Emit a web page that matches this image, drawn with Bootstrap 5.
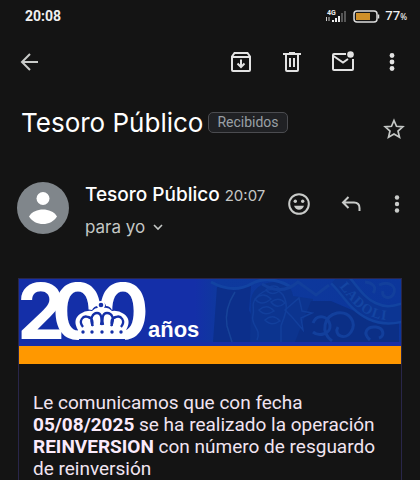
<!DOCTYPE html>
<html lang="es" data-bs-theme="dark">
<head>
<meta charset="utf-8">
<meta name="viewport" content="width=device-width, initial-scale=1">
<title>Tesoro Público</title>
<link href="https://cdn.jsdelivr.net/npm/bootstrap@5.3.0/dist/css/bootstrap.min.css" rel="stylesheet">
<style>
body{background:#141414;color:#e3e3e3;font-family:Roboto,"Liberation Sans",sans-serif;overflow-x:hidden}
svg{display:block}
.status-row{height:32px;padding:0 13px 0 25px;font-size:14px;line-height:16px;color:#f0f0f0}
.status-icons{gap:5px}
.pct{font-family:"Noto Sans",sans-serif;font-size:13px;font-weight:500}
.pct span{font-size:8px}
.icon-btn{width:36px;height:36px;padding:0;border:0;background:none;color:#e3e3e3;display:flex;align-items:center;justify-content:center;flex:none}
.toolbar{height:58px;padding:2px 12px 0 11px}
.actions{gap:15px}
.actions .more{width:32px}
.subject{height:65px;padding:0 8px 0 21px}
.subject h1{font-family:Inter,sans-serif;font-size:26px;line-height:32px;font-weight:400}
.folder{font-size:14px;line-height:19px;height:21px;padding:0 8px;border:1px solid #4b4c50;border-radius:5px;background:#202124;color:#9aa0a6;margin-left:5px}
.star{margin-top:12px}
.sender{padding:26px 11px 0 17px;height:100px}
.avatar{margin-top:1px}
.who{margin-left:16px;margin-top:2px;font-family:Inter,sans-serif}
.who h2{font-family:Inter,sans-serif;font-size:19px;line-height:24px;font-weight:500}
.when{font-size:15px;line-height:26px;color:#c4c7c5;margin-left:5px}
.para{padding:0;border:0;background:none;color:#c4c7c5;font-size:17px;line-height:24px;margin-top:6px}
.reactions{gap:16px;margin-top:5px}
.reactions .more{width:24px}
.letter{margin:23px 18px 0;border:1px solid #29264a;border-bottom:0}
.banner{height:67px;background:#142fa8;overflow:hidden}
.banner svg{width:100%;height:67px}
.stripe{height:18px;background:#ff9800}
.letter p{padding:28px 14px 0;font-size:19px;line-height:22px;color:#f1e4f1}
.letter b{font-weight:700;color:#fbeafb}
.num{font-family:Inter,sans-serif;font-weight:700;font-size:77px}
.word{font-family:"Liberation Sans",sans-serif;font-weight:700;font-size:22px}
.legend-arc{font-family:"Liberation Serif",serif;font-weight:700;font-size:14px}
</style>
<script src="https://cdn.jsdelivr.net/npm/bootstrap@5.3.0/dist/js/bootstrap.bundle.min.js"></script>
</head>
<body>
<div class="status-row d-flex align-items-center justify-content-between">
  <span class="fw-bold">20:08</span>
  <div class="status-icons d-flex align-items-center">
    <svg width="23" height="14" viewBox="0 0 23 14"><text x="2" y="6" font-size="7" font-weight="700" fill="#eee" font-family="Roboto">4G</text><path d="M1.500 8v4M4 8v4" stroke="#ccc"/><path d="M7 11h2v2H7zM10 9h2v4h-2zM13 7h2v6h-2z" fill="#eee"/><path d="M16 4h2v9h-2zM19 2h2v11h-2z" fill="#555"/></svg>
    <svg width="27" height="13" viewBox="0 0 27 13"><rect x="1" y="1" width="23" height="11" rx="3" fill="none" stroke="#ddd" stroke-width="1.5"/><rect x="3" y="3" width="14" height="7" fill="#cf9029"/><path d="M25.500 4.500v4" stroke="#ddd" stroke-width="1.5"/></svg>
    <span class="pct">77<span>%</span></span>
  </div>
</div>
<header class="toolbar d-flex align-items-center justify-content-between">
  <button class="icon-btn" aria-label="Atrás"><svg width="20" height="20" viewBox="0 0 20 20" fill="none" stroke="#c9cbc9" stroke-width="2"><path d="M19 10H3M11 2 3 10l8 8"/></svg></button>
  <div class="actions d-flex">
    <button class="icon-btn" aria-label="Archivar"><svg width="20" height="20" viewBox="0 0 20 20" fill="none" stroke="currentColor" stroke-width="2"><path d="M1 4.500 3.500 1h13L19 4.500V18q0 1-1 1H2q-1 0-1-1zM1 5h18M10 7.500v7M6.500 11.500l3.500 3.500 3.500-3.500"/></svg></button>
    <button class="icon-btn" aria-label="Eliminar"><svg width="18" height="20" viewBox="0 0 18 20" fill="none" stroke="currentColor" stroke-width="2"><path d="M0 2h18M6 1h6M3 2v16q0 1 1 1h10q1 0 1-1V2M7 6v9M11 6v9"/></svg></button>
    <button class="icon-btn" aria-label="Marcar como no leído"><svg width="22" height="22" viewBox="0 0 22 22" fill="none" stroke="currentColor" stroke-width="2"><path d="M14 3H2q-1 0-1 1v14q0 1 1 1h18q1 0 1-1V8M1.500 5 11 11.500 16 8"/><circle cx="18.500" cy="3.500" r="3.300" fill="currentColor" stroke="none"/></svg></button>
    <button class="icon-btn more" aria-label="Más opciones"><svg width="6" height="20" viewBox="0 0 6 20" fill="currentColor"><circle cx="3" cy="3.500" r="2.400"/><circle cx="3" cy="10" r="2.400"/><circle cx="3" cy="16.500" r="2.400"/></svg></button>
  </div>
</header>
<main>
  <section class="subject d-flex align-items-center">
    <h1 class="m-0 text-nowrap">Tesoro Público</h1>
    <span class="folder">Recibidos</span>
    <button class="icon-btn star ms-auto" aria-label="Destacar"><svg width="22" height="22" viewBox="0 0 22 22" fill="none" stroke="#c4c7c5" stroke-width="1.700"><path d="m11 2.500 2.500 5.800 6.300.5-4.800 4.200 1.500 6.200-5.500-3.300-5.500 3.300L7 13 2.200 8.800l6.300-.5z"/></svg></button>
  </section>
  <section class="sender d-flex align-items-start">
    <svg class="avatar flex-shrink-0" width="52" height="52" viewBox="0 0 52 52" role="img" aria-label="Tesoro Público"><circle cx="26" cy="26" r="26" fill="#80868b"/><circle cx="26" cy="16.500" r="6.500" fill="#fff"/><path d="M12 34.500c3-5 8.500-7 14-7s11 2 14 7c-3 5-8.500 7.500-14 7.500s-11-2.500-14-7.500z" fill="#fff"/></svg>
    <div class="who">
      <div class="d-flex text-nowrap"><h2 class="m-0">Tesoro Público</h2><span class="when">20:07</span></div>
      <button class="para d-flex align-items-center">para yo<svg class="ms-2" width="10" height="7" viewBox="0 0 10 7" fill="none" stroke="currentColor" stroke-width="1.600"><path d="m1 1 4 4 4-4"/></svg></button>
    </div>
    <div class="reactions d-flex ms-auto">
      <button class="icon-btn" aria-label="Reaccionar"><svg width="22" height="22" viewBox="0 0 22 22" fill="#c9cbc9"><circle cx="11" cy="11" r="9.800" fill="none" stroke="#c9cbc9" stroke-width="2"/><circle cx="7.300" cy="8.300" r="1.700"/><circle cx="14.700" cy="8.300" r="1.700"/><path d="M6 12.800h10q-1.500 4-5 4t-5-4z"/></svg></button>
      <button class="icon-btn" aria-label="Responder"><svg width="20" height="16" viewBox="0 0 20 16" fill="none" stroke="#c9cbc9" stroke-width="2"><path d="M7.500 1 2 6.500 7.500 12M2 6.500h11q5.500 0 5.500 5.500v3"/></svg></button>
      <button class="icon-btn more" aria-label="Más opciones del mensaje"><svg width="6" height="20" viewBox="0 0 6 20" fill="#c9cbc9"><circle cx="3" cy="3.500" r="2.200"/><circle cx="3" cy="10" r="2.200"/><circle cx="3" cy="16.500" r="2.200"/></svg></button>
    </div>
  </section>
  <article class="letter">
    <div class="banner">
      <svg viewBox="0 0 382 67" preserveAspectRatio="xMinYMin slice" role="img" aria-label="200 años">
        <defs><linearGradient id="fade"><stop offset="0" stop-color="#142fa8"/><stop offset=".12" stop-color="#0e399d"/><stop offset="1" stop-color="#0c369b"/></linearGradient><path id="band" d="M318-2c12 11 19 27 35 34 11 5 20 5 32 1"/></defs>
        <path d="M176 0h206v63H176z" fill="url(#fade)"/>
        <path d="M198 8q16 4 34-1l-2 24 5 12-4 20h-37z" fill="#0c2f8b"/>
        <path d="M232 20q3-15 22-17 18-1 20 14l20 3v43h-63z" fill="#0c348f"/>
        <path d="M292 22h20l28 12 40 9v20H276z" fill="#0b2f86"/>
        <path d="M192 3q22 12 40 2t40 3" fill="none" stroke="#1243a2" stroke-width="3"/>
        <path d="M216 13q-11 17-8 34l5 16" fill="none" stroke="#174399" stroke-width="1.500"/>
        <g fill="none" stroke="#123f9c" stroke-width="1.500">
          <path d="M238 61c5-12-7-14-4-25 2-8-3-10 4-18s19-11 26-2c7 12 1 22-2 31v16"/>
          <path d="M236 20q8-8 16 0-10 8-16 0zM247 11q8-8 15 0-9 7-15 0zM240 31q8-7 15 1-9 6-15-1zM252 23q8-6 14 1-8 7-14-1zM246 41q8-7 15 1-9 6-15-1zM266 31l14-12 3 13 10 2-11 5 2 12-11-13z"/>
          <path d="M243 5q20 12 36-2l18 13 13-10M294 44c4-10 16-7 17 2s-11 12-17 7M313 62c-12-9-8-25 5-28 13-2 20 10 14 19s-18 3-13-5M346 3c9 1 12 6 8 11M360 6c10-5 19 2 14 10-4 5-12 2-10-4M351 61c-8-7-3-14 6-13 8 1 9 9 3 11" stroke-width="3"/>
        </g>
        <use href="#band" stroke="#1243a0" stroke-width="20" fill="none"/>
        <use href="#band" stroke="#0c3593" stroke-width="15" fill="none"/>
        <text class="legend-arc" fill="#1445a2" dy="5"><textPath href="#band" startOffset="9">LADOLI</textPath></text>
        <path d="M0 63h382v4H0z" fill="#182fa6"/>
        <g fill="#fff">
          <text class="num" x="-2 33 78" y="60">200</text>
          <text class="word" x="129" y="58">años</text>
        </g>
        <path d="M61 61V49q-6-9 1-15 6-5 12-3 2-4 6-4 1-4 4-4t4 4q4 0 6 4 6-2 12 3 7 6 1 15v12z" fill="#142fa8" transform="translate(-1 0)"/>
        <g transform="translate(-1 0)">
        <path d="M60 60v-9q-6-10 2-16 6-4 12-3 4-4 8-3 2-1 4 0 4-1 8 3 6-1 12 3 8 6 2 16v9z" fill="#fff"/>
        <g fill="none" stroke="#142fa8" stroke-width="2.300">
          <path d="M65 48c-5-6 0-12 5-10 5 1 5 6 4 9M75 47c-4-7 0-13 4-13 5 0 5 7 4 12M85 46c-1-5-1-12 4-12s8 6 4 13M94 47c-1-4-1-8 4-9 5-2 10 4 5 10"/>
        </g>
        <circle cx="83" cy="26" r="4" fill="#fff"/>
        <g fill="#142fa8"><circle cx="83" cy="26" r="2.300"/><circle cx="65" cy="53" r="1.700"/><circle cx="74" cy="53" r="1.700"/><circle cx="84" cy="53" r="1.700"/><circle cx="94" cy="53" r="1.700"/><circle cx="103" cy="53" r="1.700"/></g>
        </g>
      </svg>
    </div>
    <div class="stripe"></div>
    <p class="m-0">Le comunicamos que con fecha <b>05/08/2025</b> se ha realizado la operación <b>REINVERSION</b> con número de resguardo de reinversión</p>
  </article>
</main>
</body>
</html>
